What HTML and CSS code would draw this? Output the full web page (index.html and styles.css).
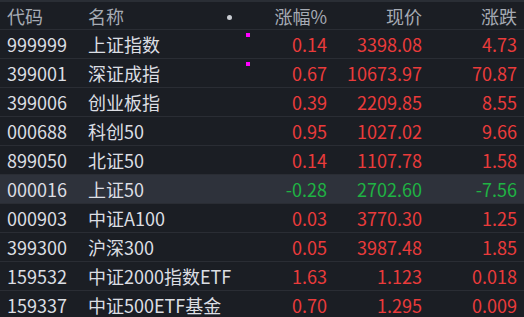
FILE: index.html
```html
<!DOCTYPE html>
<html lang="zh">
<head>
<meta charset="utf-8">
<link rel="stylesheet" href="styles.css">
</head>
<body>
<div class="table">
  <div class="row head">
    <span class="code">代码</span>
    <span class="name">名称<span class="dot"></span></span>
    <span class="num pct">涨幅%</span>
    <span class="num price">现价</span>
    <span class="num chg">涨跌</span>
  </div>
  <div class="row up">
    <span class="code">999999</span>
    <span class="name">上证指数<span class="mark"></span></span>
    <span class="num pct">0.14</span>
    <span class="num price">3398.08</span>
    <span class="num chg">4.73</span>
  </div>
  <div class="row up">
    <span class="code">399001</span>
    <span class="name">深证成指<span class="mark"></span></span>
    <span class="num pct">0.67</span>
    <span class="num price">10673.97</span>
    <span class="num chg">70.87</span>
  </div>
  <div class="row up">
    <span class="code">399006</span>
    <span class="name">创业板指</span>
    <span class="num pct">0.39</span>
    <span class="num price">2209.85</span>
    <span class="num chg">8.55</span>
  </div>
  <div class="row up">
    <span class="code">000688</span>
    <span class="name">科创50</span>
    <span class="num pct">0.95</span>
    <span class="num price">1027.02</span>
    <span class="num chg">9.66</span>
  </div>
  <div class="row up">
    <span class="code">899050</span>
    <span class="name">北证50</span>
    <span class="num pct">0.14</span>
    <span class="num price">1107.78</span>
    <span class="num chg">1.58</span>
  </div>
  <div class="row down selected">
    <span class="code">000016</span>
    <span class="name">上证50</span>
    <span class="num pct">-0.28</span>
    <span class="num price">2702.60</span>
    <span class="num chg">-7.56</span>
  </div>
  <div class="row up">
    <span class="code">000903</span>
    <span class="name">中证A100</span>
    <span class="num pct">0.03</span>
    <span class="num price">3770.30</span>
    <span class="num chg">1.25</span>
  </div>
  <div class="row up">
    <span class="code">399300</span>
    <span class="name">沪深300</span>
    <span class="num pct">0.05</span>
    <span class="num price">3987.48</span>
    <span class="num chg">1.85</span>
  </div>
  <div class="row up">
    <span class="code">159532</span>
    <span class="name">中证2000指数ETF</span>
    <span class="num pct">1.63</span>
    <span class="num price">1.123</span>
    <span class="num chg">0.018</span>
  </div>
  <div class="row up">
    <span class="code">159337</span>
    <span class="name">中证500ETF基金</span>
    <span class="num pct">0.70</span>
    <span class="num price">1.295</span>
    <span class="num chg">0.009</span>
  </div>
</div>
</body>
</html>
```
FILE: styles.css
```css
html, body {
  margin: 0;
  padding: 0;
  background: #1b1e24;
}
body {
  width: 524px;
  height: 317px;
  overflow: hidden;
  font-family: "Noto Sans CJK SC", "Noto Sans", sans-serif;
  font-size: 18px;
  color: #dcdee3;
}
.table {
  border-top: 2px solid #2a2e35;
}
.row {
  display: grid;
  grid-template-columns: 81px 153px 86px 95px 95px;
  align-items: center;
  height: 28px;
  border-bottom: 1px solid #2a2d34;
  padding-left: 7px;
  white-space: nowrap;
}
.row.head {
  height: 27px;
  color: #a6abb4;
}
.name {
  position: relative;
  display: block;
}
.num {
  text-align: right;
}
.up .num { color: #ea3b3b; }
.down .num { color: #1fb343; }
.selected {
  background: #2e323b;
}
.dot {
  position: absolute;
  left: 139px;
  top: 12px;
  width: 5px;
  height: 5px;
  border-radius: 50%;
  background: #c9ccd2;
}
.mark {
  position: absolute;
  left: 158px;
  top: 2px;
  width: 4px;
  height: 4px;
  background: #ff00ff;
}
```
